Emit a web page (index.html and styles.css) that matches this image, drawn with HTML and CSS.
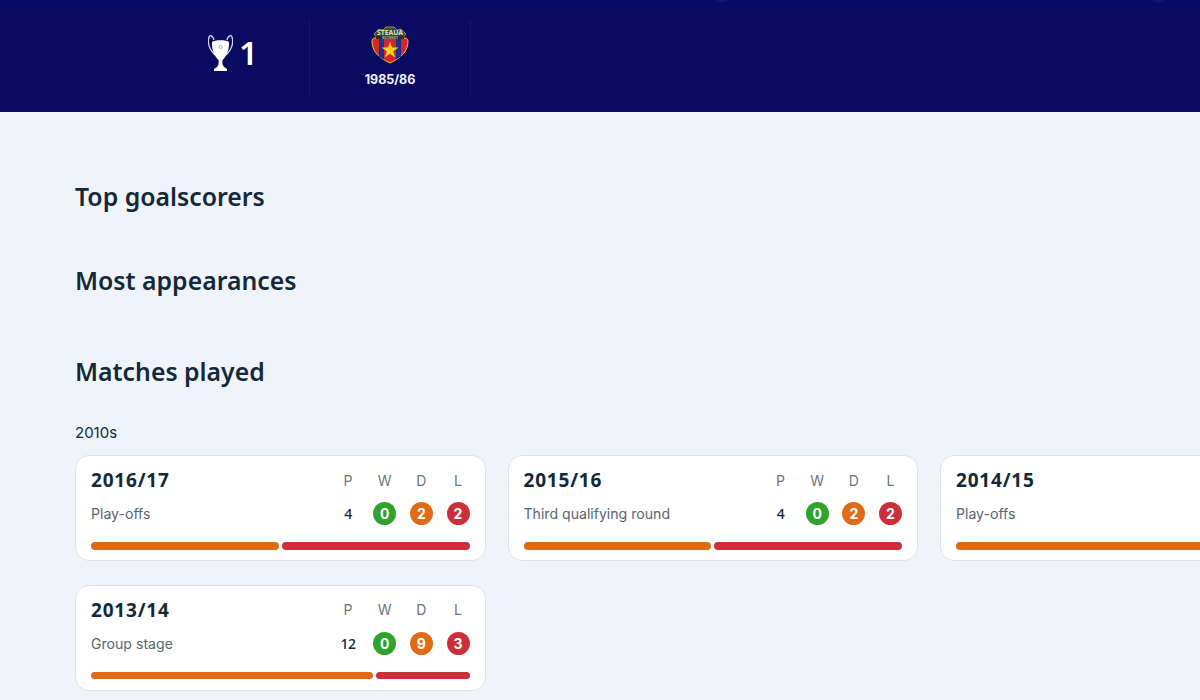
FILE: index.html
```html
<!DOCTYPE html>
<html lang="en">
<head>
  <meta charset="UTF-8">
  <meta name="viewport" content="width=device-width, initial-scale=1.0">
  <title>Club history</title>
  <link rel="stylesheet" href="styles.css">
</head>
<body>
  <header class="hero">
    <div class="hero-cell hero-titles">
      <svg class="trophy" viewBox="0 0 25 38" width="25" height="38">
        <path d="M6 6C5 2 2 0 1 3-.5 8 1 15 7 21M19 6c1-4 4-6 5-3 1.500 5 0 12-6 18" fill="none" stroke="#d5d8f0" stroke-width="1.300"/>
        <path d="M4 8c2-2.500 15-2.500 17 0 .5 8-3 15-6.500 18-.5 3 0 5 1.500 7l3 2v2H6v-2l3-2c1.500-2 2-4 1.500-7C7 23 3.500 16 4 8z" fill="#fff"/>
        <circle cx="12.500" cy="13" r="1.600" fill="none" stroke="#9a9cc4" stroke-width=".8"/>
      </svg>
      <span class="hero-count">1</span>
    </div>
    <div class="hero-cell hero-winner">
      <svg class="crest" viewBox="0 0 38 38" width="38" height="38">
        <path d="M7 13 3 8l5-5 4 1 3-3h8l3 3 4-1 5 5-4 5z" fill="#37483f" stroke="#b8a84a" stroke-width=".8"/>
        <text class="crest-name" x="19" y="9" text-anchor="middle">STEAUA</text>
        <path d="M1 15c0-1.500 1-3 3-3h30c2 0 3 1.500 3 3 0 9-5 16-18 22C6 31 1 24 1 15z" fill="#d4262a" stroke="#e8c23a" stroke-width="1"/>
        <path d="M8 13h5v20.500L8 30.500zM25 13h5v17.500l-5 3z" fill="#1c2f8c"/>
        <path d="M19 15.500l2 6h6.500l-5.300 3.800 2 6.200-5.200-3.800-5.200 3.800 2-6.200-5.300-3.800H17z" fill="#f7d21e"/>
        <rect x="5" y="10" width="28" height="3" fill="#26301f"/>
        <text class="crest-city" x="19" y="12.500" text-anchor="middle">BUCURESTI</text>
      </svg>
      <span class="hero-season">1985/86</span>
    </div>
  </header>

  <main class="content">
    <h2 class="section-title title-scorers">Top goalscorers</h2>
    <h2 class="section-title title-apps">Most appearances</h2>
    <h2 class="section-title title-matches">Matches played</h2>

    <h3 class="decade">2010s</h3>
    <div class="seasons">

      <div class="card">
        <div class="card-top">
          <div class="card-info">
            <div class="season">2016/17</div>
            <div class="stage">Play-offs</div>
          </div>
          <div class="stats">
            <span class="stat-head">P</span><span class="stat-head">W</span><span class="stat-head">D</span><span class="stat-head">L</span>
            <span class="played">4</span><span class="dot win">0</span><span class="dot draw">2</span><span class="dot loss">2</span>
          </div>
        </div>
        <div class="bar">
          <div class="bar-part draw" style="flex-grow: 2"></div>
          <div class="bar-part loss" style="flex-grow: 2"></div>
        </div>
      </div>

      <div class="card">
        <div class="card-top">
          <div class="card-info">
            <div class="season">2015/16</div>
            <div class="stage">Third qualifying round</div>
          </div>
          <div class="stats">
            <span class="stat-head">P</span><span class="stat-head">W</span><span class="stat-head">D</span><span class="stat-head">L</span>
            <span class="played">4</span><span class="dot win">0</span><span class="dot draw">2</span><span class="dot loss">2</span>
          </div>
        </div>
        <div class="bar">
          <div class="bar-part draw" style="flex-grow: 2"></div>
          <div class="bar-part loss" style="flex-grow: 2"></div>
        </div>
      </div>

      <!-- runs off the right edge, only the left part is visible -->
      <div class="card">
        <div class="card-top">
          <div class="card-info">
            <div class="season">2014/15</div>
            <div class="stage">Play-offs</div>
          </div>
        </div>
        <div class="bar">
          <div class="bar-part draw" style="flex-grow: 1"></div>
        </div>
      </div>

      <div class="card">
        <div class="card-top">
          <div class="card-info">
            <div class="season">2013/14</div>
            <div class="stage">Group stage</div>
          </div>
          <div class="stats">
            <span class="stat-head">P</span><span class="stat-head">W</span><span class="stat-head">D</span><span class="stat-head">L</span>
            <span class="played">12</span><span class="dot win">0</span><span class="dot draw">9</span><span class="dot loss">3</span>
          </div>
        </div>
        <div class="bar">
          <div class="bar-part draw" style="flex-grow: 9"></div>
          <div class="bar-part loss" style="flex-grow: 3"></div>
        </div>
      </div>

    </div>
  </main>
</body>
</html>
```
FILE: styles.css
```css
html, body {
  height: 100%;
  overflow: hidden;
}

body {
  margin: 0;
  background-color: #f1f3fa;
  font-family: Inter, "Noto Sans", sans-serif;
  color: #13293a;
}

.hero {
  height: 112px;
  padding: 20px 0 16px 155px;
  box-sizing: border-box;
  display: flex;
  background:
    radial-gradient(ellipse 8px 2px at 722px 1px, #141f88, transparent),
    radial-gradient(ellipse 8px 2px at 1158px 1px, #141f88, transparent),
    linear-gradient(#030a66 0, #0a0b60 10px);
}

.hero-cell {
  border-right: 1px solid #14166e;
  display: flex;
  align-items: center;
  justify-content: center;
}

.hero-titles {
  width: 155px;
  gap: 6px;
  padding: 0 0 10px 2px;
  box-sizing: border-box;
}

.hero-count {
  color: #fff;
  font-family: "Noto Sans", sans-serif;
  font-size: 33px;
  font-weight: 600;
  line-height: 38px;
}

.hero-winner {
  width: 161px;
  flex-direction: column;
  gap: 8px;
  padding-bottom: 3px;
  box-sizing: border-box;
}

.crest-name {
  font-family: "Noto Sans", sans-serif;
  font-size: 6.800px;
  font-weight: 700;
  fill: #dfe3c8;
}

.crest-city {
  font-family: "Noto Sans", sans-serif;
  font-size: 2.800px;
  font-weight: 700;
  fill: #b9bda0;
}

.hero-season {
  color: #f2f3fa;
  font-size: 12.500px;
  font-weight: 700;
  line-height: 15px;
}

.content {
  padding-left: 75px;
}

.section-title {
  margin: 0;
  font-family: "Noto Sans", sans-serif;
  font-size: 24.800px;
  font-weight: 600;
  line-height: 34px;
  color: #13293a;
}

.title-scorers {
  margin-top: 67px;
}

.title-apps {
  margin-top: 50px;
}

.title-matches {
  margin-top: 57px;
}

.decade {
  margin: 36px 0 13px;
  font-size: 15px;
  font-weight: 400;
  line-height: 18px;
}

.seasons {
  display: grid;
  grid-template-columns: repeat(3, 410.500px);
  gap: 23.500px 22px;
}

.card {
  height: 106px;
  box-sizing: border-box;
  padding: 10px 15px 0;
  background: #fff;
  border: 1px solid #dfe2ec;
  border-radius: 14px;
}

.card-top {
  display: flex;
  justify-content: space-between;
}

.season {
  font-family: "Noto Sans", sans-serif;
  font-size: 19px;
  font-weight: 700;
  line-height: 28px;
  letter-spacing: .8px;
}

.stage {
  margin-top: 9px;
  font-size: 14.100px;
  line-height: 22px;
  color: #56656f;
}

.stats {
  display: grid;
  grid-template-columns: repeat(4, 23px);
  column-gap: 13.700px;
  grid-template-rows: 28px 23px;
  row-gap: 8px;
  justify-items: center;
  align-items: center;
}

.stat-head {
  font-size: 14px;
  color: #6a7780;
}

.played {
  font-family: "Noto Sans", sans-serif;
  font-size: 14px;
  font-weight: 500;
  letter-spacing: -.6px;
}

.dot {
  width: 23px;
  height: 23px;
  border-radius: 50%;
  color: #fff;
  font-size: 14px;
  font-weight: 700;
  line-height: 23px;
  text-align: center;
}

.win {
  background-color: #2fa32b;
}

.draw {
  background-color: #e06b17;
}

.loss {
  background-color: #cc2f3a;
}

.bar {
  margin-top: 17px;
  height: 7.500px;
  display: flex;
  gap: 3px;
}

.bar-part {
  flex-basis: 0;
  border-radius: 4px;
}
```
